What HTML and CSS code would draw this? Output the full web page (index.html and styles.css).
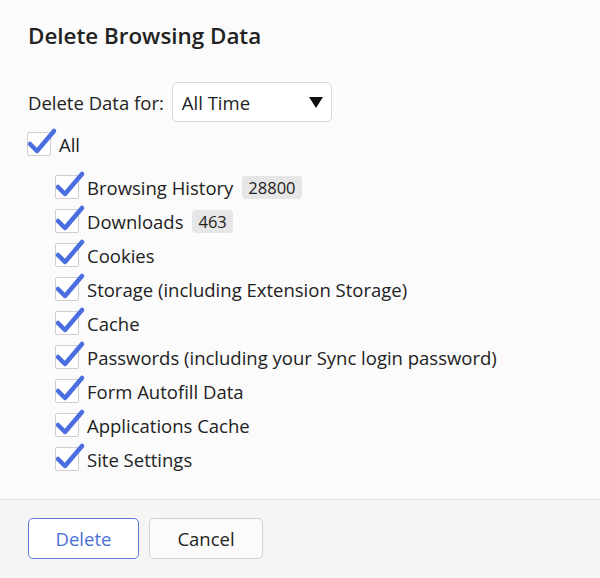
FILE: index.html
```html
<!DOCTYPE html>
<html>
<head>
<meta charset="utf-8">
<link rel="stylesheet" href="styles.css">
</head>
<body>
<div class="dialog">
  <div class="content">
    <h1 class="title">Delete Browsing Data</h1>
    <div class="period-row">
      <span class="period-label">Delete Data for:</span>
      <div class="select">
        <span class="select-value">All Time</span>
        <span class="select-arrow"></span>
      </div>
    </div>
    <label class="row row-all">
      <span class="box"><svg class="check" viewBox="0 0 32 28" width="32" height="28"><polyline points="5,16 12,23 29,3" /></svg></span>
      <span class="label">All</span>
    </label>
    <div class="items">
      <label class="row"><span class="box"><svg class="check" viewBox="0 0 32 28" width="32" height="28"><polyline points="5,16 12,23 29,3" /></svg></span><span class="label">Browsing History</span><span class="badge">28800</span></label>
      <label class="row"><span class="box"><svg class="check" viewBox="0 0 32 28" width="32" height="28"><polyline points="5,16 12,23 29,3" /></svg></span><span class="label">Downloads</span><span class="badge">463</span></label>
      <label class="row"><span class="box"><svg class="check" viewBox="0 0 32 28" width="32" height="28"><polyline points="5,16 12,23 29,3" /></svg></span><span class="label">Cookies</span></label>
      <label class="row"><span class="box"><svg class="check" viewBox="0 0 32 28" width="32" height="28"><polyline points="5,16 12,23 29,3" /></svg></span><span class="label">Storage (including Extension Storage)</span></label>
      <label class="row"><span class="box"><svg class="check" viewBox="0 0 32 28" width="32" height="28"><polyline points="5,16 12,23 29,3" /></svg></span><span class="label">Cache</span></label>
      <label class="row"><span class="box"><svg class="check" viewBox="0 0 32 28" width="32" height="28"><polyline points="5,16 12,23 29,3" /></svg></span><span class="label">Passwords (including your Sync login password)</span></label>
      <label class="row"><span class="box"><svg class="check" viewBox="0 0 32 28" width="32" height="28"><polyline points="5,16 12,23 29,3" /></svg></span><span class="label">Form Autofill Data</span></label>
      <label class="row"><span class="box"><svg class="check" viewBox="0 0 32 28" width="32" height="28"><polyline points="5,16 12,23 29,3" /></svg></span><span class="label">Applications Cache</span></label>
      <label class="row"><span class="box"><svg class="check" viewBox="0 0 32 28" width="32" height="28"><polyline points="5,16 12,23 29,3" /></svg></span><span class="label">Site Settings</span></label>
    </div>
  </div>
  <div class="footer">
    <button class="btn btn-primary">Delete</button>
    <button class="btn">Cancel</button>
  </div>
</div>
</body>
</html>
```

FILE: styles.css
```css
* { box-sizing: border-box; }
html, body { margin: 0; padding: 0; }
body {
  width: 600px;
  height: 578px;
  background: #fbfbfb;
  font-family: "Open Sans", "Noto Sans", sans-serif;
  color: #222;
  overflow: hidden;
}
.dialog {
  display: flex;
  flex-direction: column;
  height: 578px;
}
.content {
  padding: 20px 0 0 28px;
  height: 499px;
}
.title {
  margin: 0;
  font-size: 22.4px;
  font-weight: 600;
  line-height: 32px;
  height: 32px;
  color: #222;
}
.period-row {
  margin-top: 30px;
  display: flex;
  align-items: center;
  height: 40px;
  gap: 8px;
  font-size: 18.5px;
}
.select {
  width: 160px;
  height: 40px;
  border: 1px solid #d9d9d9;
  border-radius: 5px;
  background: #fff;
  display: flex;
  align-items: center;
  justify-content: space-between;
  padding: 0 8px 0 9px;
}
.select-arrow {
  width: 0;
  height: 0;
  border-left: 7px solid transparent;
  border-right: 7px solid transparent;
  border-top: 11px solid #111;
}
.row {
  display: flex;
  align-items: center;
  height: 34px;
  font-size: 18.5px;
}
.row-all {
  margin-top: 5px;
  margin-left: -1px;
}
.items {
  margin-top: 9px;
  margin-left: 27px;
}
.box {
  position: relative;
  width: 24px;
  height: 24px;
  border: 1px solid #cfcfcf;
  border-radius: 2px;
  background: #fff;
  flex: none;
  margin-right: 8px;
}
.check {
  position: absolute;
  left: -3px;
  top: -5px;
  overflow: visible;
}
.check polyline {
  fill: none;
  stroke: #4a6de0;
  stroke-width: 4.5;
  stroke-linecap: round;
  stroke-linejoin: round;
}
.badge {
  margin-left: 9px;
  height: 23px;
  line-height: 23px;
  padding: 0 6px;
  border-radius: 4px;
  background: #e6e6e6;
  font-size: 16.5px;
  color: #222;
}
.footer {
  flex: 1;
  border-top: 1px solid #e6e6e6;
  background: #f5f5f5;
  display: flex;
  gap: 10px;
  padding: 18px 0 0 28px;
  align-items: flex-start;
}
.btn {
  height: 41px;
  width: 114px;
  border: 1px solid #d2d2d2;
  border-radius: 5px;
  background: #fbfbfb;
  font-family: "Open Sans", "Noto Sans", sans-serif;
  font-size: 18.5px;
  color: #222;
  padding: 0;
}
.btn-primary {
  width: 111px;
  border-color: #5a7bd8;
  background: #fff;
  color: #4a6fd6;
}
```
